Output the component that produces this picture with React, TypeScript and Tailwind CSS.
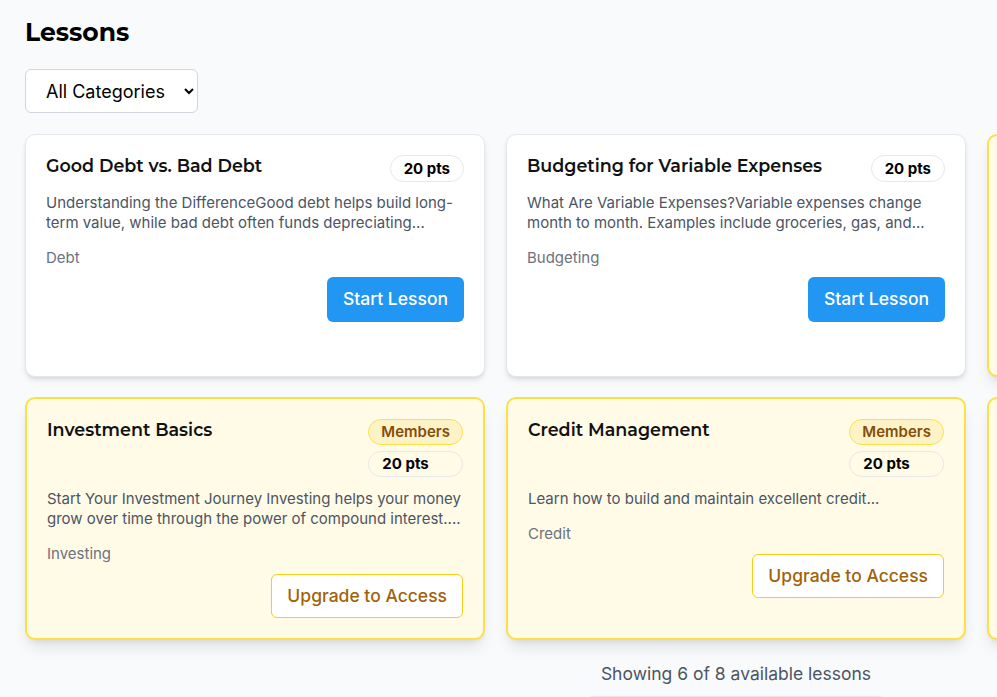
import React from 'react';

type Lesson = {
  id: number;
  title: string;
  description: string;
  category: string;
  points: number;
  members?: boolean;
};

const lessons: Lesson[] = [
  {
    id: 1,
    title: 'Good Debt vs. Bad Debt',
    description:
      'Understanding the DifferenceGood debt helps build long-term value, while bad debt often funds depreciating...',
    category: 'Debt',
    points: 20,
  },
  {
    id: 2,
    title: 'Budgeting for Variable Expenses',
    description:
      'What Are Variable Expenses?Variable expenses change month to month. Examples include groceries, gas, and...',
    category: 'Budgeting',
    points: 20,
  },
  {
    id: 3,
    title: 'Retirement Planning',
    description:
      'Planning Ahead for Retirement Saving early gives your money more time to grow through compound...',
    category: 'Retirement',
    points: 20,
    members: true,
  },
  {
    id: 4,
    title: 'Investment Basics',
    description:
      'Start Your Investment Journey Investing helps your money grow over time through the power of compound interest....',
    category: 'Investing',
    points: 20,
    members: true,
  },
  {
    id: 5,
    title: 'Credit Management',
    description: 'Learn how to build and maintain excellent credit...',
    category: 'Credit',
    points: 20,
    members: true,
  },
  {
    id: 6,
    title: 'Tax Strategies',
    description: 'Reduce what you owe with smart, legal tax planning...',
    category: 'Taxes',
    points: 20,
    members: true,
  },
];

const headingFont = "font-['Montserrat','Open_Sans','Noto_Sans',sans-serif]";

const LessonCard = ({ lesson }: { lesson: Lesson }) => {
  const locked = !!lesson.members;

  return (
    <div
      className={
        locked
          ? 'flex flex-col rounded-[10px] border-2 border-[#fde047] bg-[#fffbe7] p-5 shadow-lg shadow-black/10'
          : 'flex flex-col rounded-[10px] border border-gray-200 bg-white p-5 shadow-md shadow-black/10'
      }
    >
      <div className="flex items-start justify-between gap-4">
        <h3
          className={`${headingFont} text-[17.5px] font-semibold leading-[22px] text-[#111]`}
        >
          {lesson.title}
        </h3>
        {locked ? (
          <div className="flex shrink-0 flex-col gap-1.5">
            <span className="block h-[26px] rounded-full border border-[#fde047] bg-[#fef3c7] px-3 text-[15px] font-semibold leading-6 text-[#854d0e]">
              Members
            </span>
            <span className="block h-[26px] rounded-full border border-gray-200 px-[13px] text-[15px] font-bold leading-6 text-black">
              {lesson.points} pts
            </span>
          </div>
        ) : (
          <span className="block h-[27px] shrink-0 rounded-full border border-gray-200 px-[13px] text-[15px] font-bold leading-[25px] text-black">
            {lesson.points} pts
          </span>
        )}
      </div>
      <p
        className={`${locked ? 'mt-3' : 'mt-[11px]'} text-[15px] leading-5 text-[#4b5563]`}
      >
        {lesson.description}
      </p>
      <span className="mt-[15px] text-[15px] leading-5 text-[#6b7280]">
        {lesson.category}
      </span>
      <div className={`${locked ? 'mt-2.5' : 'mt-[9px]'} flex justify-end`}>
        {locked ? (
          <button className="h-11 rounded-md border border-[#facc15] bg-white px-[15px] text-[17.5px] font-medium text-[#a16207]">
            Upgrade to Access
          </button>
        ) : (
          <button className="h-[45px] rounded-md bg-[#2196f3] px-4 text-[17.5px] font-medium text-white">
            Start Lesson
          </button>
        )}
      </div>
    </div>
  );
};

export default function App() {
  return (
    <div className="min-h-[697px] overflow-hidden bg-gray-50 font-['Inter','Liberation_Sans',sans-serif]">
      <div className="w-max px-[25px] pt-4">
        <h1 className={`${headingFont} text-[25px] font-bold leading-8 text-black`}>
          Lessons
        </h1>
        <select className="mt-[21px] h-11 w-[173px] rounded-md border border-gray-300 bg-white pl-4 pr-3 text-lg text-black">
          <option>All Categories</option>
        </select>
        <div className="mt-[21px] grid grid-cols-[repeat(3,460px)] grid-rows-[243px_auto] gap-x-[21px] gap-y-5">
          {lessons.map((lesson) => (
            <LessonCard key={lesson.id} lesson={lesson} />
          ))}
        </div>
        <p className="mt-5 text-center text-[17.5px] leading-7 text-[#4b5563]">
          Showing 6 of 8 available lessons
        </p>
        <div className="mt-2 flex justify-center">
          <button className="h-11 w-[300px] rounded-lg border border-gray-200 bg-white text-base text-gray-700 shadow-sm">
            Load More
          </button>
        </div>
      </div>
    </div>
  );
}
